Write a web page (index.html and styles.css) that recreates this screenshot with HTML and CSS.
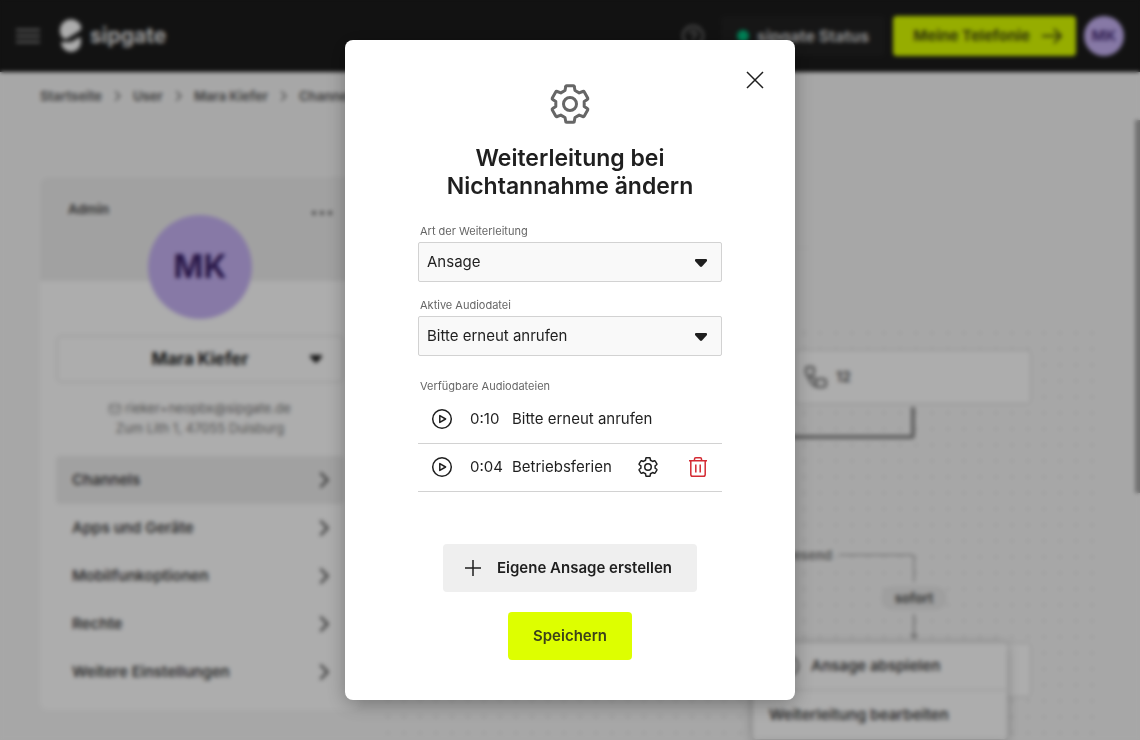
FILE: index.html
```html
<!DOCTYPE html>
<html lang="de">
<head>
    <meta charset="UTF-8">
    <meta name="viewport" content="width=device-width, initial-scale=1.0">
    <title>sipgate – Channels</title>
    <link rel="stylesheet" href="styles.css">
</head>
<body>
    <!-- shared icons -->
    <svg class="sprite" aria-hidden="true">
        <symbol id="chevron" viewBox="0 0 12 20">
            <path d="M2 2l8 8-8 8" fill="none" stroke="currentColor" stroke-width="2.400"/>
        </symbol>
        <symbol id="caret" viewBox="0 0 12 8">
            <path d="M1 0h10q1 0 1 1v1L7 7.500q-1 .8-2 0L0 2V1q0-1 1-1z" fill="currentColor"/>
        </symbol>
        <symbol id="play" viewBox="0 0 24 24">
            <circle cx="12" cy="12" r="9.300" fill="none" stroke="currentColor" stroke-width="1.500"/>
            <path d="M9.800 8.600v6.800l5.800-3.400z" fill="none" stroke="currentColor" stroke-width="1.500" stroke-linejoin="round"/>
        </symbol>
        <symbol id="gear" viewBox="0 0 48 48">
            <path d="M20.700 5.700h6.600q1 0 1 1l.7 3.800 4.200 2.400 3.600-1.400q1-.4 1.500.5l3.400 5.900q.5 1-.4 1.600l-3.100 2.100v4.800l3.100 2.100q.9.600.4 1.600l-3.400 5.900q-.5.900-1.500.5l-3.600-1.400-4.200 2.400-.7 3.800q0 1-1 1h-6.600q-1 0-1-1l-.7-3.800-4.200-2.400-3.600 1.400q-1 .4-1.500-.5l-3.400-5.900q-.5-1 .4-1.600l3.100-2.100v-4.800l-3.100-2.100q-.9-.6-.4-1.600l3.400-5.900q.5-.9 1.500-.5l3.600 1.400 4.200-2.400.7-3.800q0-1 1-1z" fill="none" stroke="currentColor" stroke-linejoin="round"/>
            <circle cx="24" cy="24" r="6.500" fill="none" stroke="currentColor"/>
        </symbol>
    </svg>

    <div class="app">
        <header class="topbar">
            <button class="burger" aria-label="Menü">
                <svg width="24" height="16" viewBox="0 0 24 16"><path d="M0 2h24M0 8h24M0 14h24" stroke="currentColor" stroke-width="2"/></svg>
            </button>
            <a class="logo" href="#">
                <svg width="22" height="34" viewBox="0 0 22 34">
                    <path d="M3 19A11 11 0 1 1 21 7q1 3-1 4.500L8 19q-3 2-5 0z" fill="currentColor"/>
                    <path d="M1 23h8q3 0 5-1.500l5-3q2-1 2 2.500v2a10 10 0 0 1-20 0z" fill="currentColor"/>
                </svg>
                <span>sipgate</span>
            </a>
            <div class="topbar-right">
                <button class="help" aria-label="Hilfe">
                    <svg width="24" height="24" viewBox="0 0 24 24" fill="none" stroke="currentColor" stroke-width="2"><circle cx="12" cy="12" r="10"/><path d="M9 10a3 3 0 1 1 4 2.800q-1 .4-1 2M12 16v2"/></svg>
                </button>
                <a class="status" href="#"><span class="status-dot"></span>sipgate Status</a>
                <a class="telefonie" href="#">Meine Telefonie
                    <svg width="20" height="16" viewBox="0 0 20 16" fill="none" stroke="currentColor" stroke-width="2"><path d="M0 8h18M12 1l7 7-7 7"/></svg>
                </a>
                <button class="avatar">MK</button>
            </div>
        </header>

        <main class="page">
            <nav class="breadcrumb" aria-label="Pfad">
                <a href="#">Startseite</a>
                <svg width="7" height="12"><use href="#chevron"/></svg>
                <a href="#">User</a>
                <svg width="7" height="12"><use href="#chevron"/></svg>
                <a href="#">Mara Kiefer</a>
                <svg width="7" height="12"><use href="#chevron"/></svg>
                <a href="#">Channels</a>
            </nav>

            <div class="columns">
                <aside class="profile">
                    <div class="profile-head">
                        <span>Admin</span>
                        <button class="more" aria-label="Mehr">
                            <svg width="20" height="4" viewBox="0 0 20 4" fill="currentColor"><circle cx="2" cy="2" r="2"/><circle cx="10" cy="2" r="2"/><circle cx="18" cy="2" r="2"/></svg>
                        </button>
                    </div>
                    <div class="avatar-large">MK</div>
                    <button class="user-select">Mara Kiefer
                        <svg width="12" height="8"><use href="#caret"/></svg>
                    </button>
                    <p class="contact">
                        <svg width="12" height="12" viewBox="0 0 12 12" fill="none" stroke="currentColor"><rect x=".5" y="1.500" width="11" height="9" rx="2"/><path d="M1 3l5 4 5-4"/></svg>
                        rieker+neopbx@sipgate.de<br>Zum Lith 1, 47055 Duisburg
                    </p>
                    <nav class="side-menu" aria-label="Einstellungen">
                        <a class="active" href="#">Channels<svg width="12" height="18"><use href="#chevron"/></svg></a>
                        <a href="#">Apps und Geräte<svg width="12" height="18"><use href="#chevron"/></svg></a>
                        <a href="#">Mobilfunkoptionen<svg width="12" height="18"><use href="#chevron"/></svg></a>
                        <a href="#">Rechte<svg width="12" height="18"><use href="#chevron"/></svg></a>
                        <a href="#">Weitere Einstellungen<svg width="12" height="18"><use href="#chevron"/></svg></a>
                    </nav>
                </aside>

                <section class="routing">
                    <div class="routing-head"></div>
                    <div class="canvas">
                        <div class="node node-phone">
                            <svg width="24" height="24" viewBox="0 0 24 24" fill="none" stroke="currentColor" stroke-width="2" stroke-linejoin="round"><path d="M4 2h4q2 0 2 2v4q0 2-2 3 1 3 4 5 0-2 3-2h4q3 0 3 3v2q0 3-3 3h-5q-5-1-8-6-1-2-2-5-2-1-2-3V4q0-2 2-2zM4 11h4M12 16v5"/></svg>
                            12
                        </div>
                        <div class="link-thick"></div>
                        <span class="edge-label">Abwesend</span>
                        <div class="link-thin"></div>
                        <span class="pill">sofort</span>
                        <svg class="link-arrow" width="10" height="26" viewBox="0 0 10 26"><path d="M5 0v22" stroke="currentColor" stroke-width="2"/><path d="M1 20h8l-4 6z" fill="currentColor"/></svg>
                        <div class="node node-target"></div>
                        <div class="popup">
                            <button><svg width="24" height="24"><use href="#play"/></svg>Ansage abspielen</button>
                            <button>Weiterleitung bearbeiten</button>
                        </div>
                    </div>
                </section>
            </div>
        </main>
        <div class="scroll-thumb"></div>
    </div>

    <div class="overlay">
        <div class="dialog" role="dialog" aria-modal="true" aria-labelledby="dialog-title">
            <button class="close" aria-label="Schließen">
                <svg width="18" height="18" viewBox="0 0 18 18"><path d="M1 1l16 16M17 1L1 17" stroke="currentColor" stroke-width="1.500"/></svg>
            </button>
            <svg class="dialog-icon" width="48" height="48" stroke-width="3"><use href="#gear"/></svg>
            <h1 id="dialog-title">Weiterleitung bei Nichtannahme ändern</h1>

            <form>
                <label for="type">Art der Weiterleitung</label>
                <div class="select">
                    <select id="type">
                        <option>Ansage</option>
                    </select>
                    <svg width="12" height="8"><use href="#caret"/></svg>
                </div>

                <label for="file">Aktive Audiodatei</label>
                <div class="select">
                    <select id="file">
                        <option>Bitte erneut anrufen</option>
                        <option>Betriebsferien</option>
                    </select>
                    <svg width="12" height="8"><use href="#caret"/></svg>
                </div>

                <h2>Verfügbare Audiodateien</h2>
                <ul class="files">
                    <li>
                        <button type="button" aria-label="Abspielen"><svg width="24" height="24"><use href="#play"/></svg></button>
                        <span class="time">0:10</span>
                        <span class="name">Bitte erneut anrufen</span>
                    </li>
                    <li>
                        <button type="button" aria-label="Abspielen"><svg width="24" height="24"><use href="#play"/></svg></button>
                        <span class="time">0:04</span>
                        <span class="name">Betriebsferien</span>
                        <button type="button" aria-label="Bearbeiten"><svg width="24" height="24" stroke-width="3"><use href="#gear"/></svg></button>
                        <button type="button" class="delete" aria-label="Löschen">
                            <svg width="24" height="24" viewBox="0 0 24 24" fill="none" stroke="currentColor" stroke-width="1.500"><path d="M3 5.800h18M8.500 5.500V4q0-1.300 1.300-1.300h4.400q1.300 0 1.300 1.300v1.500M4.800 6v13.500q0 1.800 1.800 1.800h10.800q1.800 0 1.800-1.800V6M9.800 9.500v8M14.200 9.500v8"/></svg>
                        </button>
                    </li>
                </ul>

                <div class="actions">
                    <button type="button" class="btn btn-grey">
                        <svg width="16" height="16" viewBox="0 0 16 16"><path d="M8 0v16M0 8h16" stroke="currentColor" stroke-width="1.500"/></svg>
                        Eigene Ansage erstellen
                    </button>
                    <button type="submit" class="btn btn-lime">Speichern</button>
                </div>
            </form>
        </div>
    </div>
</body>
</html>
```

FILE: styles.css
```css
* {
    box-sizing: border-box;
}
body {
    margin: 0;
    font-family: Inter, "Liberation Sans", sans-serif;
    font-size: 15px;
    line-height: 20px;
    color: #1f1f1f;
    background-color: #f7f7f7;
}
button {
    padding: 0;
    border: none;
    background: none;
    font: inherit;
    color: inherit;
    cursor: pointer;
}
a {
    color: inherit;
    text-decoration: none;
}
svg {
    display: block;
    flex: none;
}
.sprite {
    position: absolute;
    width: 0;
    height: 0;
}
.app {
    position: relative;
    height: 100vh;
    overflow: hidden;
}

/* top bar */
.topbar {
    display: flex;
    align-items: center;
    height: 72px;
    padding: 0 16px;
    background-color: #1b1b1b;
    color: #fff;
    font-weight: 700;
}
.burger {
    color: #999;
}
.logo {
    display: flex;
    align-items: center;
    gap: 8px;
    margin-left: 20px;
    font-size: 21px;
}
.logo span {
    color: #e6e6e6;
}
.topbar-right {
    display: flex;
    align-items: center;
    gap: 8px;
    margin-left: auto;
}
.help {
    margin-right: 8px;
    color: #777;
}
.status, .telefonie {
    display: flex;
    align-items: center;
    height: 40px;
    border-radius: 4px;
}
.status {
    gap: 8px;
    padding: 0 16px;
    background-color: #212121;
    color: #ccc;
    font-size: 16px;
}
.status-dot {
    width: 12px;
    height: 12px;
    border-radius: 50%;
    background-color: #00c483;
}
.telefonie {
    gap: 12px;
    padding: 0 14px 0 20px;
    background-color: #df0;
    color: #4b5210;
}
.avatar {
    width: 40px;
    height: 40px;
    border-radius: 50%;
    background-color: #c7b3f5;
    color: #4f3580;
}

/* page */
.page {
    padding: 14px 40px 0;
}
.breadcrumb {
    display: flex;
    align-items: center;
    gap: 12px;
    font-size: 13px;
    font-weight: 700;
    color: #666;
}
.columns {
    display: flex;
    align-items: flex-start;
    gap: 16px;
    margin-top: 71px;
}
.profile {
    flex: none;
    width: 320px;
    padding-bottom: 14px;
    border-radius: 8px;
    background-color: #fff;
}
.profile-head {
    display: flex;
    justify-content: space-between;
    height: 104px;
    padding: 22px 28px;
    border-radius: 8px 8px 0 0;
    background-color: #eee;
    color: #555;
    font-size: 13px;
    font-weight: 700;
}
.more {
    height: 28px;
}
.avatar-large {
    width: 104px;
    height: 104px;
    margin: -66px auto 16px;
    border-radius: 50%;
    background-color: #c7b3f5;
    color: #3a2068;
    font-size: 32px;
    font-weight: 700;
    line-height: 104px;
    text-align: center;
}
.user-select {
    display: grid;
    grid-template-columns: 1fr auto 1fr;
    align-items: center;
    width: 288px;
    height: 48px;
    margin: 0 16px;
    border: 2px solid #eee;
    border-radius: 6px;
    font-size: 17px;
    font-weight: 700;
}
.user-select::before {
    content: "";
}
.user-select svg {
    justify-self: end;
    margin-right: 20px;
}
.contact {
    margin: 15px 0 18px;
    font-size: 13px;
    color: #777;
    text-align: center;
}
.contact svg {
    display: inline-block;
    vertical-align: -2px;
}
.side-menu {
    margin: 0 16px;
}
.side-menu a {
    display: flex;
    align-items: center;
    justify-content: space-between;
    height: 48px;
    padding: 0 14px 0 16px;
    border-radius: 4px;
    font-weight: 600;
    color: #444;
}
.side-menu .active {
    background-color: #eee;
}

/* call routing */
.routing {
    flex: 1;
}
.routing-head {
    height: 72px;
    border-bottom: 2px solid #f3f3f3;
}
.canvas {
    position: relative;
    height: 500px;
    margin-top: 76px;
    background-image: radial-gradient(circle, #e0e0e0 1px, transparent 2px);
    background-size: 16px 16px;
    background-position: right top;
}
.node {
    position: absolute;
    right: 68px;
    display: flex;
    align-items: center;
    gap: 8px;
    width: 238px;
    height: 56px;
    padding: 0 8px;
    border: 2px solid #e8e8e8;
    border-radius: 6px;
    background-color: #fff;
    color: #666;
    font-size: 14px;
    font-weight: 700;
}
.node-phone {
    top: 24px;
}
.node-target {
    top: 317px;
}
.link-thick {
    position: absolute;
    top: 82px;
    right: 185px;
    width: 280px;
    height: 32px;
    border: solid #8c8c8c;
    border-width: 0 4px 4px 0;
    border-radius: 0 0 4px 0;
}
.edge-label {
    position: absolute;
    top: 220px;
    right: 268px;
    color: #777;
    font-size: 13px;
    font-weight: 600;
}
.link-thin {
    position: absolute;
    top: 229px;
    right: 185px;
    width: 76px;
    height: 28px;
    border: solid #bbb;
    border-width: 2px 2px 0 0;
    border-radius: 0 4px 0 0;
}
.pill {
    position: absolute;
    top: 261px;
    right: 153px;
    width: 66px;
    border-radius: 12px;
    background-color: #eaeaea;
    color: #555;
    font-size: 13px;
    font-weight: 700;
    line-height: 24px;
    text-align: center;
}
.link-arrow {
    position: absolute;
    top: 289px;
    right: 181px;
    color: #aaa;
}
.popup {
    position: absolute;
    top: 318px;
    right: 93px;
    width: 254px;
    border-radius: 4px;
    background-color: #fff;
    box-shadow: 0 2px 12px rgba(0,0,0,0.3);
    color: #444;
    font-weight: 600;
}
.popup button {
    display: flex;
    align-items: center;
    gap: 10px;
    width: 100%;
    height: 48px;
    padding: 0 16px;
}
.popup button:first-child {
    padding-left: 24px;
    border-bottom: 2px solid #eee;
}
.scroll-thumb {
    position: absolute;
    top: 120px;
    right: 0;
    width: 5px;
    height: 373px;
    background-color: #a6a6a6;
}

/* dialog */
.overlay {
    position: fixed;
    inset: 0;
    display: flex;
    align-items: center;
    justify-content: center;
    padding: 16px;
    background-color: rgba(0,0,0,0.32);
    backdrop-filter: blur(2px);
}
.dialog {
    position: relative;
    width: 100%;
    max-width: 450px;
    padding: 40px 73px;
    border-radius: 8px;
    background-color: #fff;
    box-shadow: 0 4px 20px rgba(0,0,0,0.3);
}
.close {
    position: absolute;
    top: 28px;
    right: 28px;
    padding: 3px;
}
.dialog-icon {
    margin: 0 auto;
    color: #666;
}
h1 {
    margin: 16px 0 23px;
    font-size: 23px;
    font-weight: 600;
    line-height: 28px;
    text-align: center;
}
label, h2 {
    display: block;
    margin: 0;
    padding-left: 2px;
    font-size: 11px;
    font-weight: 400;
    line-height: 16px;
    color: #666;
}
.select {
    position: relative;
    margin: 3px 0 15px;
}
.select select {
    appearance: none;
    display: block;
    width: 100%;
    height: 40px;
    padding: 0 8px;
    border: 1px solid #d2d2d2;
    border-radius: 2px;
    background-color: #f9f9f9;
    font: inherit;
    color: inherit;
}
.select svg {
    position: absolute;
    top: 17px;
    right: 15px;
    pointer-events: none;
}
h2 {
    margin-top: 22px;
}
.files {
    margin: 2px 0 52px;
    padding: 0;
    list-style: none;
}
.files li {
    display: flex;
    align-items: center;
    height: 48px;
    padding: 0 12px 1px;
    border-bottom: 1px solid #d2d2d2;
}
.time {
    width: 42px;
    margin-left: 16px;
}
.name {
    flex: 1;
}
.files .delete {
    margin-left: 26px;
    color: #d42a33;
}
.actions {
    display: flex;
    flex-direction: column;
    align-items: center;
    gap: 20px;
}
.btn {
    display: flex;
    align-items: center;
    gap: 16px;
    height: 48px;
    padding: 0 25px;
    border-radius: 4px;
    font-weight: 600;
}
.btn-grey {
    padding-left: 22px;
    background-color: #efefef;
}
.btn-lime {
    background-color: #df0;
    color: #3c421a;
}
```
